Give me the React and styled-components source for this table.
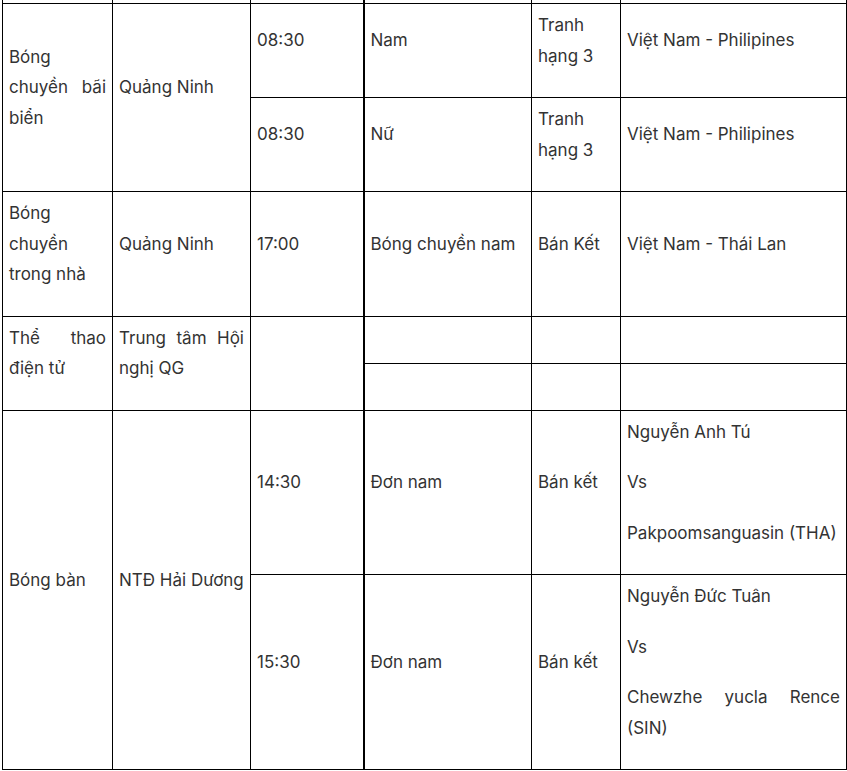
import React from 'react'
import styled, { createGlobalStyle } from 'styled-components'

const Global = createGlobalStyle`
  html, body {
    margin: 0;
    padding: 0;
    background: #fff;
  }
  body {
    font-family: Inter, "Noto Sans", "Liberation Sans", sans-serif;
    color: #333;
  }
`

const Wrapper = styled.div`
  padding-left: 2px;
  width: 844px;
`

const Table = styled.table`
  width: 844px;
  border-collapse: collapse;
  table-layout: fixed;
`

const Cell = styled.td`
  border: 1px solid #000;
  border-left-width: ${(p) => (p.$thick ? '2px' : '1px')};
  padding: 6px;
  vertical-align: middle;
  font-size: 17px;
  line-height: 30.5px;
  text-align: justify;
  p {
    margin: 0 0 20px;
  }
`

const StubCell = styled.td`
  border: 1px solid #000;
  border-top: 0;
  border-left-width: ${(p) => (p.$thick ? '2px' : '1px')};
  padding: 0;
  height: 3px;
`

const widths = [110, 138, 113, 168, 89, 226]

const Lines = ({ items }) => (
  <>
    {items.map((t, i) => (
      <p key={i}>{t}</p>
    ))}
  </>
)

const App = () => {
  return (
    <Wrapper>
      <Global />
      <Table>
        <colgroup>
          {widths.map((w, i) => (
            <col key={i} style={{ width: w }} />
          ))}
        </colgroup>
        <tbody>
          <tr>
            {widths.map((w, i) => (
              <StubCell key={i} $thick={i === 3} />
            ))}
          </tr>
          <tr>
            <Cell rowSpan={2}>
              <p>Bóng chuyền bãi biển</p>
            </Cell>
            <Cell rowSpan={2}>
              <p>Quảng Ninh</p>
            </Cell>
            <Cell>
              <p>08:30</p>
            </Cell>
            <Cell $thick>
              <p>Nam</p>
            </Cell>
            <Cell>
              <p>Tranh hạng 3</p>
            </Cell>
            <Cell>
              <p>Việt Nam - Philipines</p>
            </Cell>
          </tr>
          <tr>
            <Cell>
              <p>08:30</p>
            </Cell>
            <Cell $thick>
              <p>Nữ</p>
            </Cell>
            <Cell>
              <p>Tranh hạng 3</p>
            </Cell>
            <Cell>
              <p>Việt Nam - Philipines</p>
            </Cell>
          </tr>
          <tr>
            <Cell>
              <p>Bóng chuyền trong nhà</p>
            </Cell>
            <Cell>
              <p>Quảng Ninh</p>
            </Cell>
            <Cell>
              <p>17:00</p>
            </Cell>
            <Cell $thick>
              <p>Bóng chuyền nam</p>
            </Cell>
            <Cell>
              <p>Bán Kết</p>
            </Cell>
            <Cell>
              <p>Việt Nam - Thái Lan</p>
            </Cell>
          </tr>
          <tr>
            <Cell rowSpan={2}>
              <p>Thể thao điện tử</p>
            </Cell>
            <Cell rowSpan={2}>
              <p>Trung tâm Hội nghị QG</p>
            </Cell>
            <Cell rowSpan={2} />
            <Cell $thick />
            <Cell />
            <Cell />
          </tr>
          <tr>
            <Cell $thick />
            <Cell />
            <Cell />
          </tr>
          <tr>
            <Cell rowSpan={2}>
              <p>Bóng bàn</p>
            </Cell>
            <Cell rowSpan={2}>
              <p>NTĐ Hải Dương</p>
            </Cell>
            <Cell>
              <p>14:30</p>
            </Cell>
            <Cell $thick>
              <p>Đơn nam</p>
            </Cell>
            <Cell>
              <p>Bán kết</p>
            </Cell>
            <Cell>
              <Lines items={['Nguyễn Anh Tú', 'Vs', 'Pakpoomsanguasin (THA)']} />
            </Cell>
          </tr>
          <tr>
            <Cell>
              <p>15:30</p>
            </Cell>
            <Cell $thick>
              <p>Đơn nam</p>
            </Cell>
            <Cell>
              <p>Bán kết</p>
            </Cell>
            <Cell>
              <Lines items={['Nguyễn Đức Tuân', 'Vs', 'Chewzhe yucla Rence (SIN)']} />
            </Cell>
          </tr>
        </tbody>
      </Table>
    </Wrapper>
  )
}

export default App
